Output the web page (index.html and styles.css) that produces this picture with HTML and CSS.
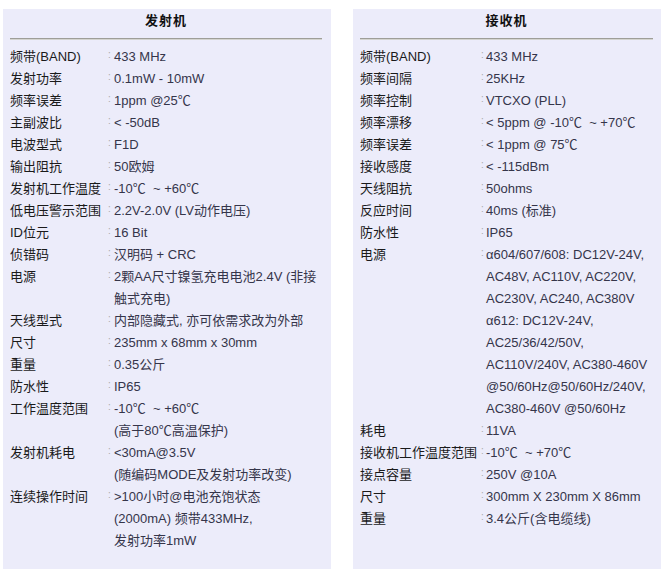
FILE: index.html
```html
<!DOCTYPE html>
<html lang="zh-CN">
<head>
<meta charset="utf-8">
<title>发射机 / 接收机 规格</title>
<link rel="stylesheet" href="styles.css">
</head>
<body>
<div class="page">
  <section class="panel panel-tx">
    <h2 class="title">发射机</h2>
    <div class="rule"></div>
    <div class="specs specs-tx">
      <div class="k">频带(BAND)</div><div class="c">:</div><div class="v">433 MHz</div>
      <div class="k">发射功率</div><div class="c">:</div><div class="v">0.1mW - 10mW</div>
      <div class="k">频率误差</div><div class="c">:</div><div class="v">1ppm @25℃</div>
      <div class="k">主副波比</div><div class="c">:</div><div class="v">&lt; -50dB</div>
      <div class="k">电波型式</div><div class="c">:</div><div class="v">F1D</div>
      <div class="k">输出阻抗</div><div class="c">:</div><div class="v">50欧姆</div>
      <div class="k">发射机工作温度</div><div class="c">:</div><div class="v">-10℃ &nbsp;~ +60℃</div>
      <div class="k">低电压警示范围</div><div class="c">:</div><div class="v">2.2V-2.0V (LV动作电压)</div>
      <div class="k">ID位元</div><div class="c">:</div><div class="v">16 Bit</div>
      <div class="k">侦错码</div><div class="c">:</div><div class="v">汉明码 + CRC</div>
      <div class="k">电源</div><div class="c">:</div><div class="v">2颗AA尺寸镍氢充电电池2.4V (非接<br>触式充电)</div>
      <div class="k">天线型式</div><div class="c">:</div><div class="v">内部隐藏式, 亦可依需求改为外部</div>
      <div class="k">尺寸</div><div class="c">:</div><div class="v">235mm x 68mm x 30mm</div>
      <div class="k">重量</div><div class="c">:</div><div class="v">0.35公斤</div>
      <div class="k">防水性</div><div class="c">:</div><div class="v">IP65</div>
      <div class="k">工作温度范围</div><div class="c">:</div><div class="v">-10℃ &nbsp;~ +60℃<br>(高于80℃高温保护)</div>
      <div class="k">发射机耗电</div><div class="c">:</div><div class="v">&lt;30mA@3.5V<br>(随编码MODE及发射功率改变)</div>
      <div class="k">连续操作时间</div><div class="c">:</div><div class="v">&gt;100小时@电池充饱状态<br>(2000mA) 频带433MHz,<br>发射功率1mW</div>
    </div>
  </section>
  <section class="panel panel-rx">
    <h2 class="title">接收机</h2>
    <div class="rule"></div>
    <div class="specs specs-rx">
      <div class="k">频带(BAND)</div><div class="c">:</div><div class="v">433 MHz</div>
      <div class="k">频率间隔</div><div class="c">:</div><div class="v">25KHz</div>
      <div class="k">频率控制</div><div class="c">:</div><div class="v">VTCXO (PLL)</div>
      <div class="k">频率漂移</div><div class="c">:</div><div class="v">&lt; 5ppm @ -10℃ &nbsp;~ +70℃</div>
      <div class="k">频率误差</div><div class="c">:</div><div class="v">&lt; 1ppm @ 75℃</div>
      <div class="k">接收感度</div><div class="c">:</div><div class="v">&lt; -115dBm</div>
      <div class="k">天线阻抗</div><div class="c">:</div><div class="v">50ohms</div>
      <div class="k">反应时间</div><div class="c">:</div><div class="v">40ms (标准)</div>
      <div class="k">防水性</div><div class="c">:</div><div class="v">IP65</div>
      <div class="k">电源</div><div class="c">:</div><div class="v">α604/607/608: DC12V-24V,<br>AC48V, AC110V, AC220V,<br>AC230V, AC240, AC380V<br>α612: DC12V-24V,<br>AC25/36/42/50V,<br>AC110V/240V, AC380-460V<br>@50/60Hz@50/60Hz/240V,<br>AC380-460V @50/60Hz</div>
      <div class="k">耗电</div><div class="c">:</div><div class="v">11VA</div>
      <div class="k">接收机工作温度范围</div><div class="c">:</div><div class="v">-10℃ &nbsp;~ +70℃</div>
      <div class="k">接点容量</div><div class="c">:</div><div class="v">250V @10A</div>
      <div class="k">尺寸</div><div class="c">:</div><div class="v">300mm X 230mm X 86mm</div>
      <div class="k">重量</div><div class="c">:</div><div class="v">3.4公斤(含电缆线)</div>
    </div>
  </section>
</div>
</body>
</html>
```

FILE: styles.css
```css
html, body {
  margin: 0;
  padding: 0;
  background: #ffffff;
  overflow: hidden;
}

body {
  font-family: "Liberation Sans", Arial, "Noto Sans CJK SC", sans-serif;
  font-size: 13px;
  color: #333;
}

.page {
  display: flex;
  align-items: flex-start;
  gap: 22px;
  padding: 9px 0 0 3px;
  height: 569px;
  box-sizing: border-box;
}

.panel {
  background: #ececfa;
  height: 560px;
  box-sizing: border-box;
  flex: none;
  padding-top: 1px;
}

.panel-tx {
  width: 328px;
  padding-left: 7px;
  padding-right: 9px;
}

.panel-rx {
  width: 308px;
  padding-left: 7px;
  padding-right: 8px;
}

.title {
  margin: 0;
  font-size: 13px;
  font-weight: bold;
  line-height: 22px;
  text-align: center;
  color: #111;
  letter-spacing: 1px;
}

.rule {
  height: 1px;
  background: #9e9e98;
  border-bottom: 1px solid #d4d4d0;
  margin: 6px 0 6px;
}

.specs {
  display: grid;
  line-height: 22px;
  white-space: nowrap;
}

.specs-tx {
  grid-template-columns: 97px 7px 1fr;
}

.specs-rx {
  grid-template-columns: 120px 6px 1fr;
}

.k {
  color: #1a1a1a;
}

.c {
  color: #aaa;
  font-size: 10px;
  line-height: 18px;
  padding-left: 1px;
}

.v {
  color: #35354a;
}
```
